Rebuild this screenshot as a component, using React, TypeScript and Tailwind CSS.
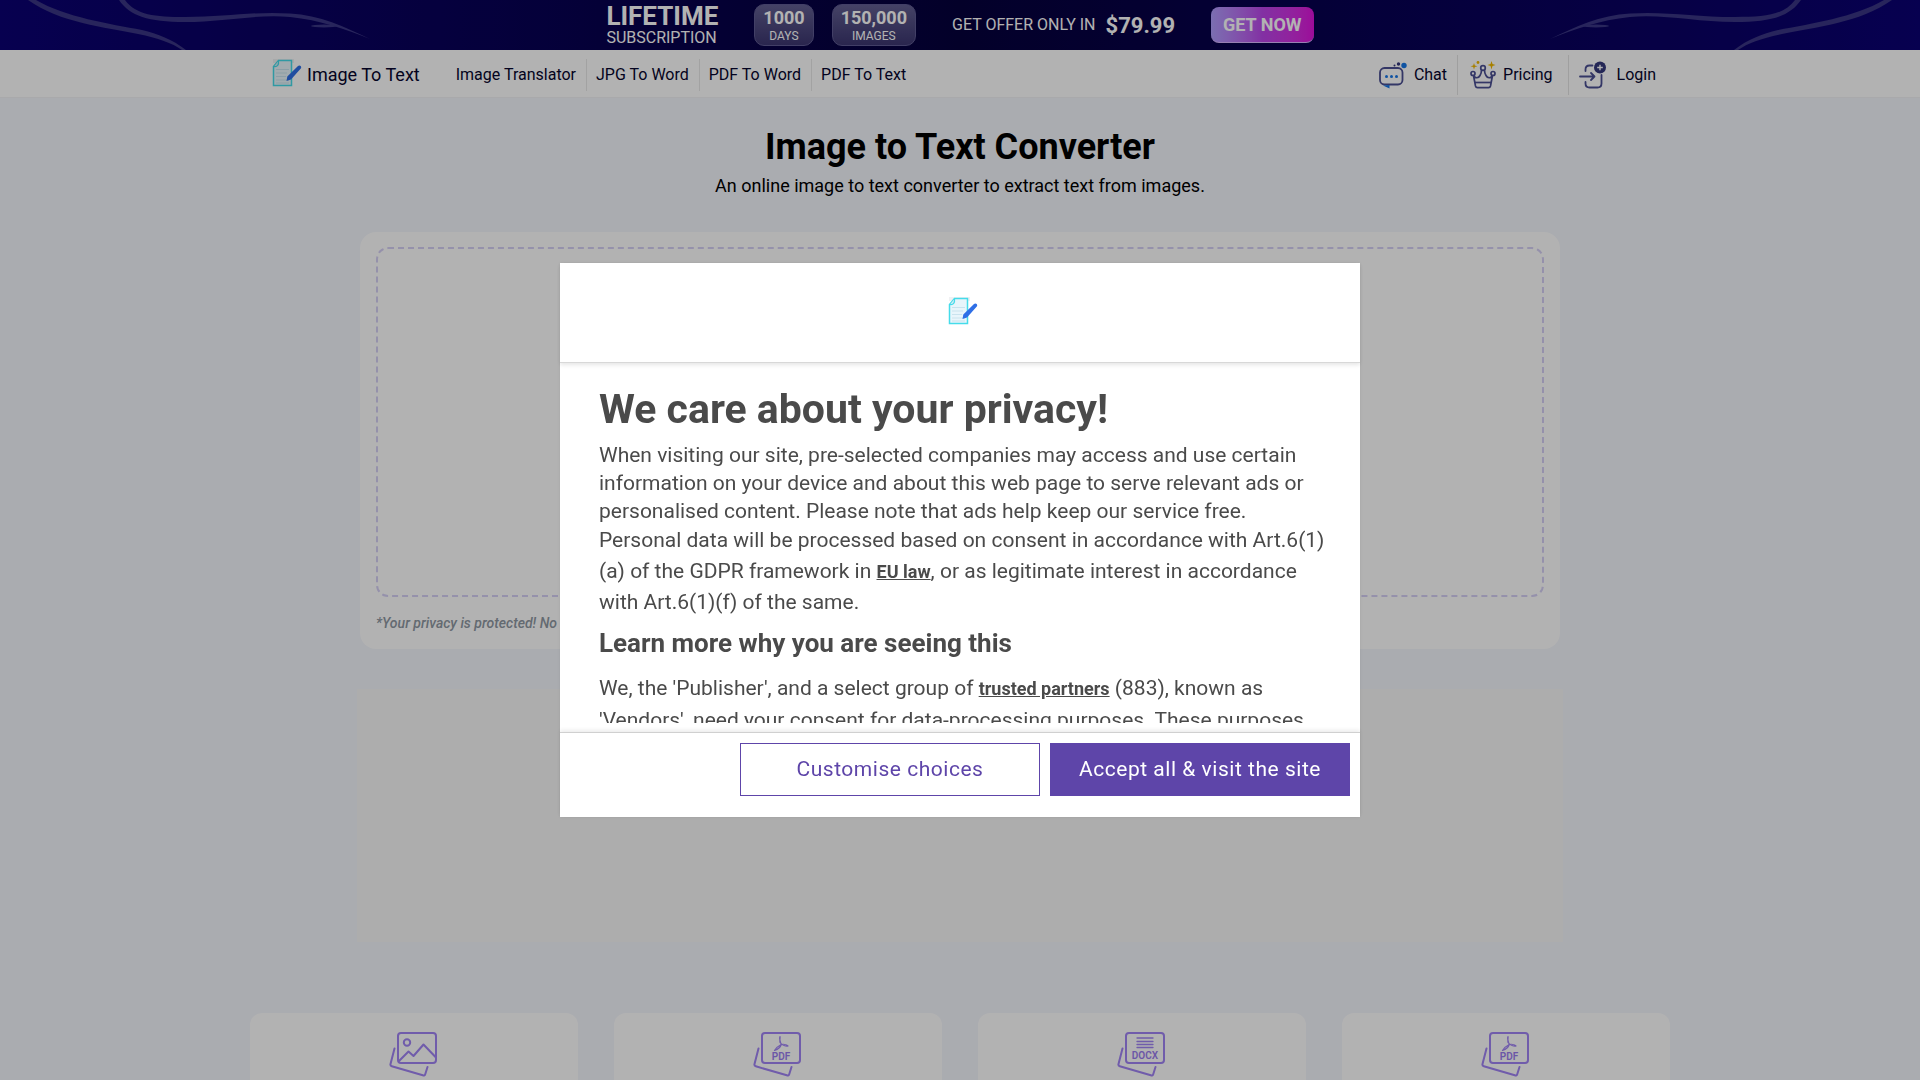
import type { ReactNode } from "react";

function NoteLogo() {
  return (
    <svg width="30" height="30" viewBox="0 0 30 30" fill="none" aria-hidden="true">
      <path d="M1 1h21v4H1z" fill="#f0f1f3" />
      <path d="M6.5 2.5H19.5V27.5H1.5V8.5z" fill="#e8f5fb" stroke="#45dcea" strokeWidth="1.5" />
      <path d="M2 8.500c3.500.5 5-1.500 4.500-5.500" stroke="#45dcea" strokeWidth="1.200" fill="#d9ecf6" />
      <path d="M4 11.500h13M4 15h11M4 18.500h10M4 22h13M4 25h13" stroke="#c9e3ee" strokeWidth="1.200" />
      <path d="M26 8c1.500-1.500 4 .2 3 2.200L19 21.500l-4.500 1.500.8-4.500z" fill="#2f6fe6" />
    </svg>
  );
}

function ChatIcon() {
  return (
    <svg width="28" height="28" viewBox="0 0 28 28" fill="none" aria-hidden="true">
      <rect x="1" y="7" width="22.500" height="16.500" rx="4.500" stroke="#4b4f93" strokeWidth="1.800" />
      <path d="M4 24.500l6.500-.5v3.500z" fill="#1677e8" />
      <circle cx="7.500" cy="15.500" r="1.500" fill="#1677e8" />
      <circle cx="12.500" cy="15.500" r="1.500" fill="#1677e8" />
      <circle cx="17.500" cy="15.500" r="1.500" fill="#1677e8" />
      <circle cx="25" cy="4.500" r="2.700" fill="#1677e8" />
      <circle cx="19.500" cy="3" r="1.700" fill="#34387c" />
      <circle cx="15.500" cy="4.500" r="1" fill="#34387c" />
    </svg>
  );
}

function CrownIcon() {
  return (
    <svg width="26" height="28" viewBox="0 0 26 28" fill="none" aria-hidden="true">
      <g stroke="#4b4f93" strokeWidth="1.700" strokeLinejoin="round">
        <path d="M3.500 14.500L5.500 25c.3 1.300 1 1.700 2 1.700h11c1 0 1.700-.4 2-1.700l2-10.500c-2 3-5 3-6.500 0-1-1.500-1.500-3-1.500-5.500h-3c0 2.500-.5 4-1.500 5.500-1.500 3-4.500 3-6.500 0z" />
        <path d="M5 21.500h16" />
        <circle cx="13" cy="7" r="2.300" fill="#fff" />
        <circle cx="3" cy="12.500" r="2" fill="#fff" />
        <circle cx="23" cy="12.500" r="2" fill="#fff" />
      </g>
      <path d="M21.500 0l1 3 3 1-3 1-1 3.500-1-3.500-3-1 3-1z" fill="#f0b800" />
      <path d="M4 2l.8 2.500 2.700.7-2.700.8L4 8.500 3.200 6 .5 5.200l2.700-.7z" fill="#f0b800" />
      <circle cx="8" cy="1.500" r="1.400" fill="#f0b800" />
    </svg>
  );
}

function LoginIcon() {
  return (
    <svg width="28" height="28" viewBox="0 0 28 28" fill="none" aria-hidden="true">
      <g stroke="#4b4f93" strokeWidth="1.800" strokeLinecap="round" strokeLinejoin="round">
        <path d="M13.500 4.500h-3c-2.500 0-4 1.500-4 4V10" />
        <path d="M6.500 21v1.500c0 2.500 1.500 4 4 4h8c2.500 0 4-1.500 4-4V14" />
        <path d="M1 15.500h14.500M12 12l3.500 3.500L12 19" />
      </g>
      <circle cx="21" cy="6.500" r="6" fill="#34387c" />
      <path d="M21 3.700v5.600M18.200 6.500h5.600" stroke="#fff" strokeWidth="1.400" />
    </svg>
  );
}

function ToolIcon({ children }: { children: ReactNode }) {
  return (
    <svg width="48" height="46" viewBox="0 0 48 46" fill="none" stroke="#a184f5" strokeLinecap="round" strokeLinejoin="round" aria-hidden="true">
      <rect x="9" y="1" width="38" height="30" rx="3" strokeWidth="2" />
      <path d="M5.500 16.500L1.500 32c-.3 1.200 0 1.900 1.300 2.300l31 9c1.300.4 2.200 0 2.500-1.300L38.500 35" strokeWidth="2" />
      {children}
    </svg>
  );
}

const pictureArt = (
  <>
    <circle cx="18" cy="10.500" r="3.200" strokeWidth="2" />
    <path d="M10 29L19.500 19.500l5 4.500L34.500 12.500 46.500 25" strokeWidth="2" />
  </>
);

const pdfArt = (
  <>
    <path d="M27 4.500c-1.500 2 1.500 7 1 8.500-.5 2-4 4.500-6.500 5.500 1-2 4-4.500 6-5.500 2.500-1 6-.5 7.500 1-2 .7-6-1-8-3.500-.7-2 .5-4.500 0-6z" strokeWidth="1.200" />
    <text x="28" y="28" textAnchor="middle" fill="#9a7cf0" stroke="none" className="text-[10px] font-semibold">PDF</text>
  </>
);

const docxArt = (
  <>
    <path d="M20 6h16M20 9.500h16M20 12.500h16M20 15.500h16" strokeWidth="1.300" />
    <text x="28" y="27" textAnchor="middle" fill="#9a7cf0" stroke="none" className="text-[10px] font-semibold">DOCX</text>
  </>
);

function Waves({ className }: { className: string }) {
  return (
    <svg className={className} width="560" height="50" viewBox="0 0 560 50" aria-hidden="true">
      <g fill="#3a3584">
        <path d="M28 0C60 23 105 27 138 34C158 38 172 43 182 50h4C172 39 158 34 142 30C110 24 65 17 36 0z" />
        <path d="M119 0C130 16 148 22 185 22C225 22 255 14 290 17C320 20 345 29 370 39C345 27 320 15 290 13.500C255 11 225 17 185 17C155 17 136 15 125 0z" />
        <ellipse cx="324" cy="26" rx="13" ry="1.500" />
      </g>
    </svg>
  );
}

function Badge({ value, unit }: { value: string; unit: string }) {
  return (
    <div className="flex h-[42px] flex-col items-center rounded-[10px] border border-[#5f5b92] bg-linear-to-b from-[#635f92] to-[#3c3670] px-2 pt-[3px]">
      <span className="text-lg leading-5 font-bold">{value}</span>
      <span className="text-xs leading-4">{unit}</span>
    </div>
  );
}

const links = ["Image Translator", "JPG To Word", "PDF To Word", "PDF To Text"];
const tools = [
  { label: "Image Translator", art: pictureArt },
  { label: "PDF To Word", art: pdfArt },
  { label: "JPG To Word", art: docxArt },
  { label: "PDF To Text", art: pdfArt },
];

export default function App() {
  return (
    <div className="h-screen overflow-hidden bg-[#f4f6fd] font-[Roboto,sans-serif] text-black">
      <div className="relative flex h-[50px] items-center justify-center overflow-hidden bg-linear-to-r from-[#0b0073] via-[#05003c] to-[#0b0073] text-white">
        <Waves className="absolute top-0 left-0" />
        <Waves className="absolute top-0 right-0 -scale-x-100" />
        <div className="relative flex items-center">
          <div className="mr-9 pt-0.5">
            <p className="text-[26px] leading-6 font-bold">LIFETIME</p>
            <p className="text-base leading-5">SUBSCRIPTION</p>
          </div>
          <div className="mr-9 flex gap-[18px]">
            <Badge value="1000" unit="DAYS" />
            <Badge value="150,000" unit="IMAGES" />
          </div>
          <p className="mr-9 flex items-center gap-2.5">
            <span>GET OFFER ONLY IN</span>
            <strong className="text-[22px]">$79.99</strong>
          </p>
          <button className="h-9 rounded-lg border-b border-[#d9b8ff] bg-linear-to-r from-[#b09fff] via-[#bb45ea] to-[#e010dc] px-3 text-lg font-bold">
            GET NOW
          </button>
        </div>
      </div>

      <header className="h-12 border-b border-[#f3f3f5] bg-white pt-[3px] text-[#06052d]">
        <div className="mx-auto flex h-full max-w-[1400px] items-center pr-1 pl-3">
          <a href="#home" className="flex items-center gap-[5px] text-lg">
            <span className="pb-1">
              <NoteLogo />
            </span>
            Image To Text
          </a>
          <nav className="ml-[27px] flex divide-x divide-[#e8e8e8]">
            {links.map((link) => (
              <a key={link} href="#tool" className="flex h-8 items-center pr-2.5 pl-[9px]">
                {link}
              </a>
            ))}
          </nav>
          <div className="ml-auto flex h-10 divide-x divide-[#e4e4e4]">
            <a href="#chat" className="flex items-center gap-[7px] pr-2.5">
              <ChatIcon />
              Chat
            </a>
            <a href="#pricing" className="flex items-center gap-[7px] pr-[15px] pl-3">
              <CrownIcon />
              Pricing
            </a>
            <a href="#login" className="flex items-center gap-2.5 pl-2.5">
              <LoginIcon />
              Login
            </a>
          </div>
        </div>
      </header>

      <main className="px-4">
        <div className="pt-[26px] text-center">
          <h1 className="text-4xl leading-[46px] font-bold">Image to Text Converter</h1>
          <p className="pt-0.5 text-lg leading-7">An online image to text converter to extract text from images.</p>
        </div>
        <section className="mx-auto mt-8 max-w-[1200px] rounded-2xl bg-white px-4 pt-[15px] pb-4">
          <div className="h-[350px] rounded-xl border-2 border-dashed border-[#d6d0f5]" />
          <p className="pt-4 text-sm leading-5 font-medium text-[#8f98a3] italic">
            *Your privacy is protected! No data is transmitted or stored.
          </p>
        </section>
        <div className="mx-auto mt-10 h-[253px] max-w-[1206px] bg-[#f8f8f8]" />
        <section className="mx-auto mt-[71px] grid max-w-[1420px] grid-cols-4 gap-9">
          {tools.map((tool) => (
            <a key={tool.label} href="#tool" aria-label={tool.label} className="flex h-40 justify-center rounded-xl bg-white pt-[19px] pr-0.5">
              <ToolIcon>{tool.art}</ToolIcon>
            </a>
          ))}
        </section>
      </main>

      <div className="fixed inset-0 z-10 flex items-center justify-center bg-black/30">
        <div role="dialog" aria-modal="true" aria-labelledby="privacy-title" className="w-full max-w-[800px] bg-white text-[#4a4a4a] shadow-[0_0_4px_rgba(0,0,0,0.08)]">
          <div className="relative flex h-[100px] items-center justify-center border-b border-[#d8d8d8] pb-1 pl-1.5 shadow-[0_2px_4px_rgba(0,0,0,0.1)]">
            <NoteLogo />
          </div>
          <div className="h-[360px] overflow-y-auto pt-5 pr-[30px] pl-[39px] text-[21px] [scrollbar-width:none]">
            <h2 id="privacy-title" className="text-[41px] leading-[52px] font-bold">We care about your privacy!</h2>
            <p className="pt-1.5 leading-7">
              When visiting our site, pre-selected companies may access and use certain information on your device and about this web page to serve relevant ads or personalised content. Please note that ads help keep our service free.
            </p>
            <p className="leading-[31px]">
              Personal data will be processed based on consent in accordance with Art.6(1)(a) of the GDPR framework in{" "}
              <a href="#law" className="text-lg leading-5 font-bold underline">EU law</a>, or as legitimate interest in accordance with Art.6(1)(f) of the same.
            </p>
            <h3 className="pt-[7px] text-[26px] leading-9 font-bold">Learn more why you are seeing this</h3>
            <p className="pt-[11px] leading-8">
              We, the 'Publisher', and a select group of{" "}
              <a href="#partners" className="text-lg leading-5 font-bold underline">trusted partners</a> (883), known as 'Vendors', need your consent for data-processing purposes. These purposes include personalised ads and content.
            </p>
          </div>
          <div className="mt-[9px] flex justify-end gap-2.5 border-t border-[#d0d0d0] px-2.5 pt-2.5 pb-[21px] text-[21px] shadow-[0_-2px_4px_rgba(0,0,0,0.08)]">
            <button className="h-[53px] w-[300px] border border-[#5e45a9] tracking-wide text-[#5e45a9]">Customise choices</button>
            <button className="h-[53px] w-[300px] bg-[#5e45a9] tracking-wide text-white">Accept all &amp; visit the site</button>
          </div>
        </div>
      </div>
    </div>
  );
}
